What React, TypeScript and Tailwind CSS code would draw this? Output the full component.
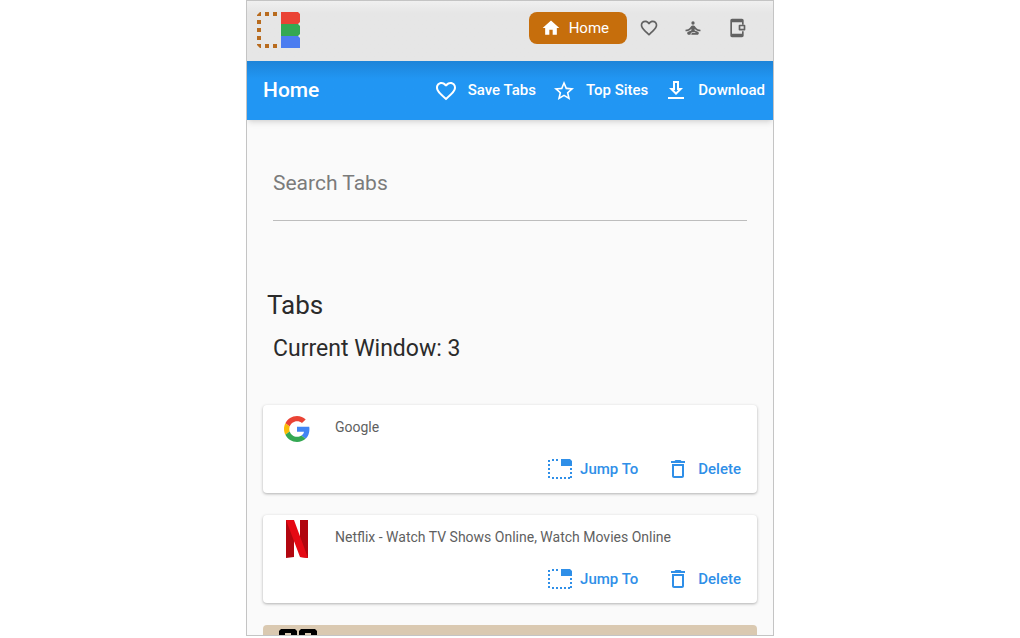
import { MdDeleteOutline, MdFavoriteBorder, MdHome, MdSelfImprovement, MdStarBorder } from 'react-icons/md';

interface Tab {
  id: string;
  title: string;
  icon: 'google' | 'netflix';
}

const tabs: Tab[] = [
  { id: '1', title: 'Google', icon: 'google' },
  { id: '2', title: 'Netflix - Watch TV Shows Online, Watch Movies Online', icon: 'netflix' },
];

function Logo() {
  return (
    <svg viewBox="0 0 44 36" className="h-9 w-11" aria-hidden="true">
      <g fill="#b86b1e">
        <path d="M4 0h1v4H1V3z" />
        <path d="M9 0h4v4H9zM17 0h4v4h-4z" />
        <path d="M1 8h4v4H1zM1 16h4v4H1zM1 24h4v4H1z" />
        <path d="M1 32h4v4H4l-3-3zM9 32h4v4H9zM17 32h4v4h-4z" />
      </g>
      <path d="M25 0h17l2 2v8l-2 2H25z" fill="#ea4335" />
      <path d="M25 12h17l2 2v8l-2 2H25z" fill="#34a853" />
      <path d="M25 24h17l2 2v10H25z" fill="#4c7df0" />
    </svg>
  );
}

function DeviceIcon() {
  return (
    <svg viewBox="0 0 24 24" className="size-5" fill="currentColor" aria-hidden="true">
      <path d="M18 8V5H6v14h12v-3h2v5c0 1.100-.9 2-2 2H6c-1.100 0-2-.9-2-2V3c0-1.100.9-2 2-2h12c1.100 0 2 .9 2 2v5z" />
      <path d="M15 8h6c.6 0 1 .4 1 1v5c0 .6-.4 1-1 1h-6c-.6 0-1-.4-1-1V9c0-.6.4-1 1-1zm1 2v3h4v-3z" />
    </svg>
  );
}

function DownloadIcon() {
  return (
    <svg viewBox="0 0 24 24" className="size-6" fill="currentColor" aria-hidden="true">
      <path d="M19 9h-4V2H9v7H5l7 7 7-7zm-8 2V4h2v7h1.170L12 13.170 9.830 11H11zm-7 7h16v2H4z" />
    </svg>
  );
}

function JumpIcon() {
  return (
    <svg viewBox="0 0 24 20" className="h-5 w-6" fill="currentColor" aria-hidden="true">
      <path d="M0 1h2v2H0zM4 0h2v2H4zM8 0h2v2H8zM0 5h2v2H0zM0 9h2v2H0zM0 13h2v2H0zM0 17h2v2H0zM4 18h2v2H4zM8 18h2v2H8zM12 18h2v2h-2zM16 18h2v2h-2zM20 18h2v2h-2zM22 9h2v2h-2zM22 13h2v2h-2zM22 17h2v2h-2z" />
      <path d="M13 0h9l2 2v5H13z" />
    </svg>
  );
}

function GoogleIcon() {
  return (
    <svg viewBox="0 0 48 48" className="size-6.5" aria-hidden="true">
      <path fill="#EA4335" d="M24 9.500c3.540 0 6.710 1.220 9.210 3.600l6.850-6.850C35.900 2.380 30.470 0 24 0 14.620 0 6.510 5.380 2.560 13.220l7.980 6.190C12.430 13.720 17.740 9.500 24 9.500z" />
      <path fill="#4285F4" d="M46.980 24.550c0-1.570-.15-3.090-.38-4.550H24v9.020h12.940c-.58 2.960-2.260 5.480-4.780 7.180l7.730 6c4.510-4.180 7.090-10.360 7.090-17.650z" />
      <path fill="#FBBC05" d="M10.530 28.590c-.48-1.450-.76-2.990-.76-4.590s.27-3.140.76-4.590l-7.980-6.190C.92 16.460 0 20.120 0 24c0 3.880.92 7.540 2.560 10.780l7.970-6.190z" />
      <path fill="#34A853" d="M24 48c6.480 0 11.930-2.130 15.890-5.810l-7.730-6c-2.150 1.450-4.920 2.300-8.160 2.300-6.260 0-11.570-4.220-13.470-9.910l-7.980 6.190C6.510 42.620 14.620 48 24 48z" />
    </svg>
  );
}

function NetflixIcon() {
  return (
    <svg viewBox="0 0 22 38" className="h-9.5 w-5.5" aria-hidden="true">
      <path d="M0 0h8v37l-8 1zM14 0h8v38l-8-1z" fill="#b1060f" />
      <path d="M0 0h8l14 38c-3-.5-5-.8-8-1z" fill="#e50914" />
    </svg>
  );
}

function TabCard({ tab }: { tab: Tab }) {
  return (
    <li className="flex h-22 flex-col justify-between rounded-sm bg-white shadow-[0_1px_3px_rgba(0,0,0,0.3)]">
      <div className="flex h-12 items-center pl-5">
        <div className="flex w-7 justify-center">
          {tab.icon === 'google' ? <GoogleIcon /> : <NetflixIcon />}
        </div>
        <p className="pb-1 pl-6 text-[14px] text-[#5f5f5f]">{tab.title}</p>
      </div>
      <div className="flex justify-end gap-7 pr-4 pb-3 text-[15px] font-medium text-[#2f8fe8]">
        <button className="flex items-center gap-2">
          <JumpIcon />
          Jump To
        </button>
        <button className="flex items-center gap-2">
          <MdDeleteOutline className="size-6" />
          Delete
        </button>
      </div>
    </li>
  );
}

export default function App() {
  return (
    <div className="h-screen bg-white pb-0.5 font-[Roboto,sans-serif]">
      <div className="mx-auto flex h-full max-w-[528px] flex-col overflow-hidden border border-[#c4c4c4] bg-[#fafafa]">
        <nav className="flex h-15 shrink-0 items-center justify-between bg-linear-to-b from-[#f0f0f0] to-[#e6e6e6] to-20% pr-[26px] pb-0.5 pl-[9px]">
          <Logo />
          <div className="flex items-center gap-6 pb-1 text-[#626262]">
            <button className="-mr-3 flex h-8 items-center gap-2 rounded-lg bg-[#c66e0c] pr-[18px] pl-3 text-[15px] text-white">
              <MdHome className="size-5" />
              Home
            </button>
            <button aria-label="Favorites">
              <MdFavoriteBorder className="size-5" />
            </button>
            <button aria-label="Focus">
              <MdSelfImprovement className="size-5" />
            </button>
            <button aria-label="Device">
              <DeviceIcon />
            </button>
          </div>
        </nav>

        <header className="z-10 flex h-[59px] shrink-0 items-center justify-between bg-linear-to-b from-[#1d84d8] to-[#2196f3] to-30% pr-2 pl-4 font-medium text-white shadow-md">
          <h1 className="text-[21px]">Home</h1>
          <div className="flex gap-4 text-[15px]">
            <button className="flex items-center gap-2.5">
              <MdFavoriteBorder className="size-6" />
              Save Tabs
            </button>
            <button className="flex items-center gap-2.5">
              <MdStarBorder className="size-6" />
              Top Sites
            </button>
            <button className="flex items-center gap-2.5">
              <DownloadIcon />
              Download
            </button>
          </div>
        </header>

        <main className="px-4 pt-7">
          <div className="px-2.5">
            <input
              type="text"
              aria-label="Search Tabs"
              placeholder="Search Tabs"
              className="h-[73px] w-full border-b border-[#bdbdbd] bg-transparent pb-0.5 text-[21px] text-[#212121] outline-none placeholder:text-[#7b7b7b]"
            />
          </div>
          <h2 className="mt-16 pl-1 text-[26px] leading-10 text-[#2b2b2b]">Tabs</h2>
          <p className="mt-1 pl-2.5 text-[23px] leading-10 text-[#2b2b2b]">Current Window: 3</p>
          <ul className="mt-9 flex flex-col gap-5.5">
            {tabs.map((tab) => (
              <TabCard key={tab.id} tab={tab} />
            ))}
            <li className="h-22 rounded-sm bg-[#dac9b1] pt-1 pl-4">
              <svg viewBox="0 0 38 36" className="h-9 w-9.5" aria-hidden="true">
                <path d="M2 0h14l2 2v34H0V2zM22 0h14l2 2v34H20V2z" fill="#000" />
                <path d="M6 4h6v2H6zM26 4h6v2h-6z" fill="#dac9b1" />
              </svg>
            </li>
          </ul>
        </main>
      </div>
    </div>
  );
}
